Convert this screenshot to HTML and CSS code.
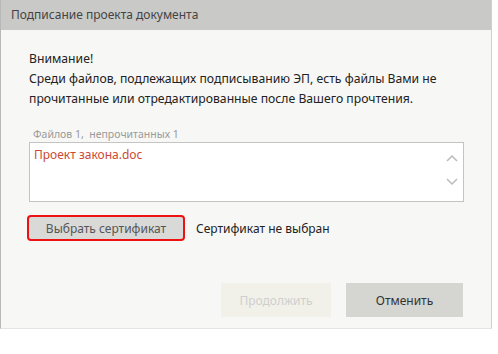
FILE: index.html
```html
<!DOCTYPE html>
<html lang="ru">
<head>
  <meta charset="UTF-8">
  <title>Подписание проекта документа</title>
  <link rel="stylesheet" href="styles.css">
</head>
<body>
  <div class="dialog">
    <div class="dialog-title">Подписание проекта документа</div>

    <div class="dialog-body">
      <p class="warning">
        Внимание!<br>
        Среди файлов, подлежащих подписыванию ЭП, есть файлы Вами не<br>
        прочитанные или отредактированные после Вашего прочтения.
      </p>

      <div class="files-caption">Файлов 1,&nbsp; непрочитанных 1</div>
      <div class="files-box">
        <div class="file-list">
          <div class="file-item">Проект закона.doc</div>
        </div>
        <div class="scroller">
          <svg width="12" height="8" viewBox="0 0 12 8"><path d="M1 7 L6 2 L11 7" fill="none" stroke="#bbb" stroke-width="1.5"/></svg>
          <svg width="12" height="8" viewBox="0 0 12 8"><path d="M1 1 L6 6 L11 1" fill="none" stroke="#bbb" stroke-width="1.5"/></svg>
        </div>
      </div>

      <div class="cert-row">
        <button class="cert-btn">Выбрать сертификат</button>
        <span class="cert-status">Сертификат не выбран</span>
      </div>

      <div class="actions">
        <button class="btn btn-disabled" disabled>Продолжить</button>
        <button class="btn btn-cancel">Отменить</button>
      </div>
    </div>
  </div>
</body>
</html>
```

FILE: styles.css
```css
body {
  margin: 0;
  background: #ffffff;
  font-family: "Noto Sans", "Open Sans", sans-serif;
  font-size: 12.2px;
  color: #222;
}

.dialog {
  width: 490px;
  height: 328px;
  border-left: 1px solid #b8b8b8;
  border-right: 1px solid #d0d0d0;
  border-bottom: 1px solid #e4e4e4;
  background: #f7f7f5;
  display: flex;
  flex-direction: column;
}

.dialog-title {
  height: 30px;
  background: #c9c9c7;
  color: #444;
  font-size: 12px;
  line-height: 30px;
  padding-left: 10px;
}

.dialog-body {
  flex: 1;
  padding: 19px 27px 0 28px;
  display: flex;
  flex-direction: column;
}

.warning {
  margin: 0;
  line-height: 20px;
  color: #222;
}

.files-caption {
  margin-top: 18px;
  padding-left: 4px;
  font-size: 10.5px;
  color: #9a9a9a;
  line-height: 14px;
}

.files-box {
  margin-top: 1px;
  width: 433px;
  height: 58px;
  border: 1px solid #c4c4c4;
  background: #ffffff;
  display: flex;
}

.file-list {
  flex: 1;
  padding: 3px 4px;
}

.file-item {
  color: #cc4a32;
  font-size: 12px;
}

.scroller {
  width: 22px;
  display: flex;
  flex-direction: column;
  align-items: center;
  justify-content: space-between;
  padding: 11px 0 15px;
}

.cert-row {
  margin-top: 13px;
  margin-left: -2px;
  display: flex;
  align-items: center;
  gap: 11px;
}

.cert-btn {
  width: 158px;
  height: 26px;
  border: 2px solid #ee1111;
  border-radius: 4px;
  background: #d9d9d7;
  color: #555;
  font-family: inherit;
  font-size: 12px;
  padding: 0;
}

.cert-status {
  color: #222;
  font-size: 12px;
}

.actions {
  margin-top: 42px;
  display: flex;
  justify-content: flex-end;
  gap: 15px;
  padding-right: 1px;
}

.btn {
  height: 34px;
  border: none;
  font-family: inherit;
  font-size: 12px;
  padding: 0;
}

.btn-disabled {
  width: 110px;
  background: #f1f1e9;
  color: #cfcfcf;
}

.btn-cancel {
  width: 117px;
  background: #d5d5d1;
  color: #333;
}
```
